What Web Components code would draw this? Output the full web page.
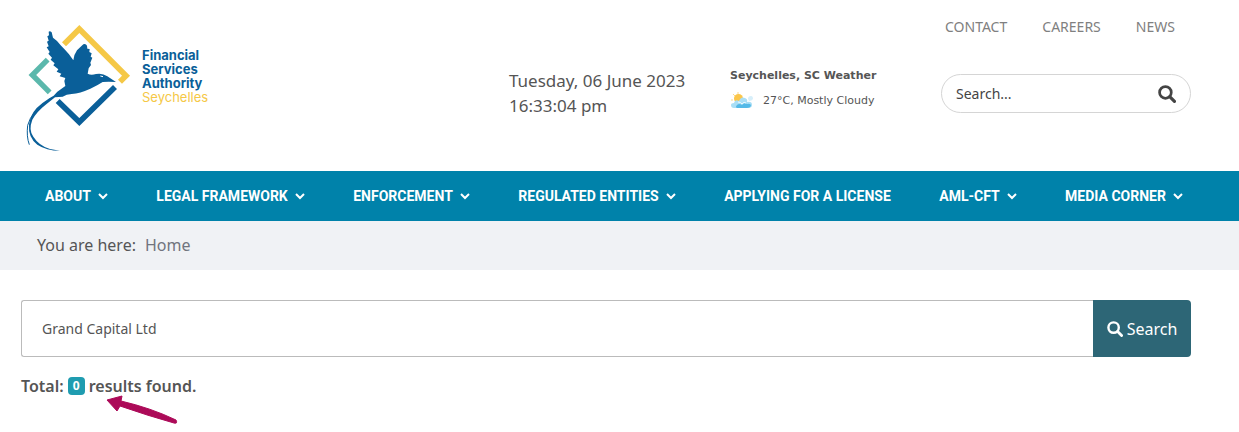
<!DOCTYPE html>
<html lang="en">
<head>
<meta charset="utf-8">
<meta name="viewport" content="width=device-width, initial-scale=1">
<title>Search - Financial Services Authority Seychelles</title>
<style>
    body {
        margin: 0;
        background: #fff;
        color: #555;
        font-family: "Noto Sans", sans-serif;
        font-size: 16px;
    }
</style>
</head>
<body>
<fsa-header>
    <fsa-logo slot="logo"></fsa-logo>
    <fsa-clock slot="clock" date="Tuesday, 06 June 2023" time="16:33:04 pm"></fsa-clock>
    <fsa-weather slot="weather" place="Seychelles, SC Weather">27°C, Mostly Cloudy</fsa-weather>
    <fsa-tools slot="tools"></fsa-tools>
</fsa-header>
<fsa-nav>
    <fsa-nav-item menu>ABOUT</fsa-nav-item>
    <fsa-nav-item menu>LEGAL FRAMEWORK</fsa-nav-item>
    <fsa-nav-item menu>ENFORCEMENT</fsa-nav-item>
    <fsa-nav-item menu>REGULATED ENTITIES</fsa-nav-item>
    <fsa-nav-item>APPLYING FOR A LICENSE</fsa-nav-item>
    <fsa-nav-item menu>AML-CFT</fsa-nav-item>
    <fsa-nav-item menu>MEDIA CORNER</fsa-nav-item>
</fsa-nav>
<fsa-breadcrumb>Home</fsa-breadcrumb>
<fsa-results query="Grand Capital Ltd" total="0"></fsa-results>

<script>
const searchIcon = `
    <svg viewBox="0 0 16 16" width="16" height="16" aria-hidden="true">
        <circle cx="6.6" cy="6.6" r="5.2" fill="none" stroke="currentColor" stroke-width="2.4"/>
        <path d="M10.6 10.6L14.6 14.6" stroke="currentColor" stroke-width="2.8" stroke-linecap="round"/>
    </svg>`;

class FsaHeader extends HTMLElement {

    constructor() {
        super();
        this.attachShadow({mode: "open"});
    }

    connectedCallback() {
        let html = `
            <header>
                <slot name="logo"></slot>
                <slot name="clock"></slot>
                <slot name="weather"></slot>
                <slot name="tools"></slot>
            </header>
        `;

        let css = `
            :host { display: block; }
            header {
                display: grid;
                grid-template-columns: 488fr 221fr 211fr 250fr;
                align-items: start;
                padding: 15px 48px 11px 21px;
            }
        `;

        this.shadowRoot.innerHTML = `<style>${css}</style>${html}`;
    }

}

customElements.define("fsa-header", FsaHeader);


class FsaLogo extends HTMLElement {

    constructor() {
        super();
        this.attachShadow({mode: "open"});
    }

    connectedCallback() {
        let html = `
            <svg viewBox="18 0 357 435" width="119" height="145" aria-hidden="true">
                <path d="M147 88L193 42L333 182L315 200" fill="none" stroke="#f5c846" stroke-width="17"/>
                <path d="M98 134L52 180L104 232" fill="none" stroke="#5bb8ac" stroke-width="16"/>
                <path d="M128 258L193 321L300 216" fill="none" stroke="#0a5f99" stroke-width="17"/>
                <path fill="#0a5f99" d="M101 50Q105 47 110 52L114 68L126 78L137 91L150 104L162 118L175 136Q177 118 186 106L205 88Q212 84 216 92L217 101L224 102L223 111L230 115L227 125L232 128L226 143L228 150L221 160L218 176Q228 182 243 177Q262 173 277 184L303 201Q280 200 263 201Q248 211 226 221Q195 235 170 237Q154 238 143 245L120 247L92 269Q65 290 52 314Q40 345 55 365Q72 392 105 402L135 407Q94 407 67 389Q39 367 42 329Q46 300 65 279Q84 262 103 250L116 242L127 230L151 213L148 198L151 189L134 184L139 176L125 170L130 163L115 151L119 145L107 134L111 128L100 116L104 111L95 97L101 94L96 80L101 77L97 64L102 61Z"/>
                <path d="M110 248Q48 289 38 331Q34 365 43 389" fill="none" stroke="#0a5f99" stroke-width="3"/>
                <path d="M256 183L264 185" stroke="#fff" stroke-width="3"/>
            </svg>
            <div class="name">
                <b>Financial</b>
                <b>Services</b>
                <b>Authority</b>
                <span>Seychelles</span>
            </div>
        `;

        let css = `
            :host { display: flex; align-items: flex-start; gap: 2px; }
            svg { flex: none; }
            .name {
                display: flex;
                flex-direction: column;
                padding-top: 33px;
                font-family: Inter, sans-serif;
                font-size: 13px;
                line-height: 14px;
            }
            b { color: #0a5f99; font-weight: 700; }
            span { color: #f5c846; }
        `;

        this.shadowRoot.innerHTML = `<style>${css}</style>${html}`;
    }

}

customElements.define("fsa-logo", FsaLogo);


class FsaClock extends HTMLElement {

    constructor() {
        super();
        this.attachShadow({mode: "open"});
    }

    connectedCallback() {
        let html = `
            <div>${this.getAttribute("date")}</div>
            <div>${this.getAttribute("time")}</div>
        `;

        let css = `
            :host {
                display: block;
                padding-top: 53px;
                font-size: 17px;
                line-height: 25px;
                white-space: nowrap;
            }
        `;

        this.shadowRoot.innerHTML = `<style>${css}</style>${html}`;
    }

}

customElements.define("fsa-clock", FsaClock);


class FsaWeather extends HTMLElement {

    constructor() {
        super();
        this.attachShadow({mode: "open"});
    }

    connectedCallback() {
        let html = `
            <b>${this.getAttribute("place")}</b>
            <div class="now">
                <svg viewBox="0 0 24 18" width="24" height="18" aria-hidden="true">
                    <circle cx="8.500" cy="6.500" r="4.500" fill="#fbc64a"/>
                    <path d="M3 2L5 4M8 0V2M3 8H1" stroke="#fbd98a" stroke-width="1"/>
                    <path d="M18 7Q18 4 21 4Q23 4 23 7Q22 9 19 9Z" fill="#d7effa"/>
                    <path d="M4 16Q1 16 1 13Q1 11 4 11Q5 7 9 9Q11 4 15 6Q18 7 17 10Q22 9 22 13Q22 16 18 16Z" fill="#a9def5"/>
                    <path d="M7 16Q5 15 7 13Q9 11 12 13Q14 10 17 12Q21 11 21 14Q20 16 17 16Z" fill="#54b9e7"/>
                    <path d="M8 10Q11 10 12 12Q14 9 16 11" fill="none" stroke="#edf9fe" stroke-width="1"/>
                </svg>
                <slot></slot>
            </div>
        `;

        let css = `
            :host {
                display: block;
                padding-top: 48px;
                font-family: "DejaVu Sans", sans-serif;
                font-size: 11px;
                line-height: 25px;
                white-space: nowrap;
            }
            .now { display: flex; align-items: center; gap: 9px; }
        `;

        this.shadowRoot.innerHTML = `<style>${css}</style>${html}`;
    }

}

customElements.define("fsa-weather", FsaWeather);


class FsaTools extends HTMLElement {

    constructor() {
        super();
        this.attachShadow({mode: "open"});
    }

    connectedCallback() {
        let html = `
            <nav>
                <a href="#">CONTACT</a>
                <a href="#">CAREERS</a>
                <a href="#">NEWS</a>
            </nav>
            <form>
                <input type="search" placeholder="Search..." aria-label="Search the site">
                <button type="button" aria-label="Search">${searchIcon}</button>
            </form>
        `;

        let css = `
            :host { display: block; }
            nav {
                display: flex;
                justify-content: space-between;
                padding: 0 16px 0 4px;
                font-size: 14px;
                line-height: 24px;
            }
            a { color: #808080; text-decoration: none; }
            form {
                display: flex;
                align-items: center;
                box-sizing: border-box;
                height: 39px;
                margin-top: 35px;
                padding: 0 14px;
                border: 1px solid #d5d5d5;
                border-radius: 20px;
            }
            input {
                flex: 1;
                min-width: 0;
                padding: 0;
                border: 0;
                outline: 0;
                background: none;
                color: #444;
                font: inherit;
                font-size: 14px;
            }
            input::placeholder { color: #444; opacity: 1; }
            button { padding: 0; border: 0; background: none; color: #444; }
            svg { display: block; width: 18px; height: 18px; }
        `;

        this.shadowRoot.innerHTML = `<style>${css}</style>${html}`;
    }

}

customElements.define("fsa-tools", FsaTools);


class FsaNav extends HTMLElement {

    constructor() {
        super();
        this.attachShadow({mode: "open"});
    }

    connectedCallback() {
        let css = `
            :host { display: block; background: #0082aa; }
            nav {
                display: flex;
                justify-content: space-between;
                padding: 0 56px 0 45px;
            }
        `;

        this.shadowRoot.innerHTML = `<style>${css}</style><nav><slot></slot></nav>`;
    }

}

customElements.define("fsa-nav", FsaNav);


class FsaNavItem extends HTMLElement {

    constructor() {
        super();
        this.attachShadow({mode: "open"});
    }

    connectedCallback() {
        let arrow = "";
        if (this.hasAttribute("menu")) {
            arrow = `
                <svg viewBox="0 0 10 8" width="10" height="8" aria-hidden="true">
                    <path d="M1 2L5 6L9 2" fill="none" stroke="currentColor" stroke-width="2"/>
                </svg>`;
        }

        let css = `
            :host { display: block; }
            a {
                display: flex;
                align-items: center;
                gap: 7px;
                color: #fff;
                font-family: Roboto, sans-serif;
                font-size: 14px;
                font-weight: 700;
                line-height: 50px;
                text-decoration: none;
                white-space: nowrap;
            }
        `;

        this.shadowRoot.innerHTML = `<style>${css}</style><a href="#"><slot></slot>${arrow}</a>`;
    }

}

customElements.define("fsa-nav-item", FsaNavItem);


class FsaBreadcrumb extends HTMLElement {

    constructor() {
        super();
        this.attachShadow({mode: "open"});
    }

    connectedCallback() {
        let css = `
            :host {
                display: flex;
                gap: 9px;
                padding: 0 37px;
                background: #f0f2f5;
                font-size: 16px;
                line-height: 49px;
            }
            a { color: #71757e; text-decoration: none; }
        `;

        this.shadowRoot.innerHTML = `<style>${css}</style><span>You are here:</span><a href="#"><slot></slot></a>`;
    }

}

customElements.define("fsa-breadcrumb", FsaBreadcrumb);


class FsaResults extends HTMLElement {

    constructor() {
        super();
        this.attachShadow({mode: "open"});
    }

    connectedCallback() {
        let html = `
            <form>
                <input type="text" value="${this.getAttribute("query")}" aria-label="Search terms">
                <button type="button">${searchIcon}<span>Search</span></button>
            </form>
            <p>
                <span>Total:</span>
                <span class="badge">${this.getAttribute("total")}</span>
                <span>results found.</span>
                <svg class="pointer" viewBox="0 0 72 32" width="72" height="32" aria-hidden="true">
                    <path d="M1 6L16 2L15 7Q45 14 70 26Q72 30 68 29Q43 22 14 12L11 17Z" fill="#ac0a58" stroke="#ac0a58" stroke-width="1" stroke-linejoin="round"/>
                </svg>
            </p>
        `;

        let css = `
            :host { display: block; padding: 30px 48px 32px 21px; }
            form { display: flex; height: 57px; }
            input {
                flex: 1;
                min-width: 0;
                box-sizing: border-box;
                padding: 0 20px;
                border: 1px solid #bbb;
                border-right: 0;
                border-radius: 3px 0 0 3px;
                outline: 0;
                color: #555;
                font: inherit;
                font-size: 14px;
            }
            button {
                display: flex;
                align-items: center;
                justify-content: center;
                gap: 4px;
                width: 98px;
                padding: 0;
                border: 0;
                border-radius: 0 4px 4px 0;
                background: #2d6676;
                color: #fff;
                font: inherit;
            }
            p {
                position: relative;
                display: flex;
                align-items: center;
                gap: 4px;
                margin: 16px 0 0;
                font-weight: 600;
                line-height: 26px;
            }
            .badge {
                width: 17px;
                border-radius: 4px;
                background: #1f9cb0;
                color: #fff;
                font-size: 12px;
                font-weight: 700;
                line-height: 18px;
                text-align: center;
            }
            .pointer { position: absolute; left: 85px; top: 21px; }
        `;

        this.shadowRoot.innerHTML = `<style>${css}</style>${html}`;
    }

}

customElements.define("fsa-results", FsaResults);
</script>
</body>
</html>
